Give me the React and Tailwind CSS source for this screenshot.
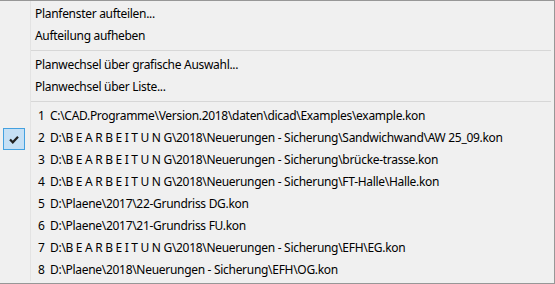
import React from "react";

const Item = ({ children, num }) => (
  <div className="h-[22px] flex items-center pl-[4px] text-[12px] leading-none tracking-[-0.3px] text-black whitespace-nowrap">
    {num ? (
      <>
        <span className="inline-block w-[12px] pl-[3px] box-content">{num}</span>
        <span>{children}</span>
      </>
    ) : (
      children
    )}
  </div>
);

const Sep = () => (
  <div className="h-[7px] flex items-center">
    <div className="h-px w-full bg-[#d7d7d7]" />
  </div>
);

const files = [
  "C:\\CAD.Programme\\Version.2018\\daten\\dicad\\Examples\\example.kon",
  "D:\\B E A R B E I T U N G\\2018\\Neuerungen - Sicherung\\Sandwichwand\\AW 25_09.kon",
  "D:\\B E A R B E I T U N G\\2018\\Neuerungen - Sicherung\\brücke-trasse.kon",
  "D:\\B E A R B E I T U N G\\2018\\Neuerungen - Sicherung\\FT-Halle\\Halle.kon",
  "D:\\Plaene\\2017\\22-Grundriss DG.kon",
  "D:\\Plaene\\2017\\21-Grundriss FU.kon",
  "D:\\B E A R B E I T U N G\\2018\\Neuerungen - Sicherung\\EFH\\EG.kon",
  "D:\\Plaene\\2018\\Neuerungen - Sicherung\\EFH\\OG.kon",
];

export default function App() {
  return (
    <div
      className="w-[555px] h-[284px] bg-[#f0f0f0] border-t border-r border-b border-[#979797] flex"
      style={{ fontFamily: '"Noto Sans", "Open Sans", sans-serif' }}
    >
      <div className="w-[30px] shrink-0 pt-[127px] pl-[3px]">
        <div className="w-[22px] h-[22px] bg-[#c6e0f5] border border-[#44a1e0] flex items-center justify-center">
          <svg width="10" height="9" viewBox="0 0 10 9">
            <path d="M1 4.5 L3.8 7.3 L9 1.8" stroke="#222" strokeWidth="2.2" fill="none" />
          </svg>
        </div>
      </div>
      <div className="flex-1 flex flex-col border-l border-[#e3e3e3] pt-[2px] pr-[3px] mb-[2px]">
        <Item>Planfenster aufteilen...</Item>
        <Item>Aufteilung aufheben</Item>
        <Sep />
        <Item>Planwechsel über grafische Auswahl...</Item>
        <Item>Planwechsel über Liste...</Item>
        <Sep />
        {files.map((f, i) => (
          <Item key={i} num={i + 1}>
            {f}
          </Item>
        ))}
      </div>
    </div>
  );
}
